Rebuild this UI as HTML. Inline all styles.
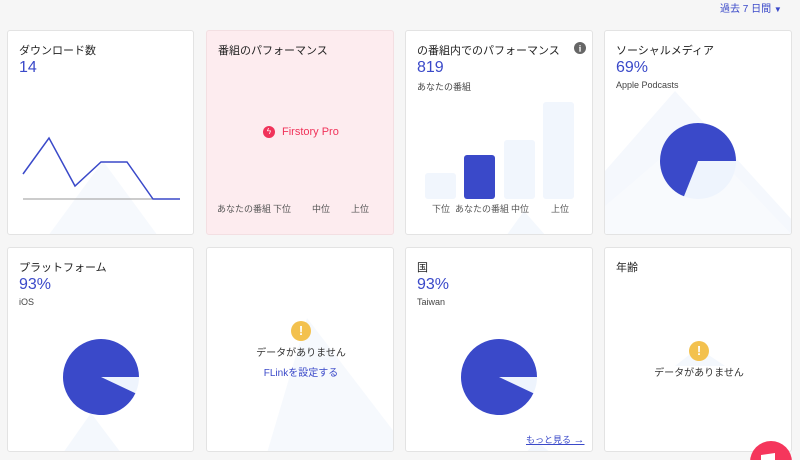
<!DOCTYPE html>
<html style="width:800px;height:460px;overflow:hidden"><head><meta charset="utf-8"><style>
*{margin:0;padding:0;box-sizing:border-box}
body{width:800px;height:460px;background:#f6f6f6;font-family:"Liberation Sans","Noto Sans CJK JP",sans-serif;position:relative;overflow:hidden;color:#333}
.card{position:absolute;background:#fff;border:1px solid #e3e3e3;border-radius:3px;overflow:hidden}
.t{position:absolute;left:11px;top:11px;font-size:11px;color:#222}
.n{position:absolute;left:11px;top:28px;font-size:16px;color:#3a49c9}
.s{position:absolute;left:11px;top:49px;font-size:9px;color:#444}
svg{position:absolute;left:0;top:0}
.lbl{position:absolute;font-size:9px;color:#555}
</style></head><body>
<div style="position:absolute;left:720px;top:0;font-size:10px;color:#3a49c9">過去 7 日間 <span style="font-size:8px">▼</span></div>

<div class="card" style="left:7px;top:30px;width:187px;height:205px">
<svg width="187" height="205"><polygon points="40,205 95,130 150,205" fill="#f6f9fd"/>
<line x1="15" y1="168" x2="145" y2="168" stroke="#999" stroke-width="1"/>
<polyline points="15,143 41,107 67,155 93,131 119,131 145,168 172,168" fill="none" stroke="#3a49c9" stroke-width="1.5"/></svg>
<div class="t">ダウンロード数</div><div class="n">14</div></div>

<div class="card" style="left:206px;top:30px;width:188px;height:205px;background:#fdecef;border-color:#f3dfe2">
<div class="t">番組のパフォーマンス</div>
<div style="position:absolute;left:56px;top:95px;font-size:11px;color:#f0335a;display:flex;align-items:center"><span style="display:inline-block;width:12px;height:12px;border-radius:50%;background:#f0335a;color:#fff;font-size:8px;text-align:center;line-height:12px;margin-right:7px">ϟ</span>Firstory Pro</div>
<div class="lbl" style="left:10px;top:171px">あなたの番組</div><div class="lbl" style="left:66px;top:171px">下位</div><div class="lbl" style="left:105px;top:171px">中位</div><div class="lbl" style="left:144px;top:171px">上位</div></div>

<div class="card" style="left:405px;top:30px;width:188px;height:205px">
<svg width="188" height="205"><polygon points="100,205 118,180 140,205" fill="#f4f8fd"/>
<rect x="19" y="142" width="31" height="26" rx="3" fill="#f1f6fd"/>
<rect x="58" y="124" width="31" height="44" rx="3" fill="#3a49c9"/>
<rect x="98" y="109" width="31" height="59" rx="3" fill="#f1f6fd"/>
<rect x="137" y="71" width="31" height="97" rx="3" fill="#f1f6fd"/>
<circle cx="174" cy="17" r="6" fill="#666"/><text x="174" y="20.5" font-size="9" fill="#fff" text-anchor="middle" font-family="Liberation Serif" font-weight="bold">i</text></svg>
<div class="t">の番組内でのパフォーマンス</div><div class="n">819</div><div class="s">あなたの番組</div>
<div class="lbl" style="left:26px;top:171px">下位</div><div class="lbl" style="left:49px;top:171px">あなたの番組</div><div class="lbl" style="left:105px;top:171px">中位</div><div class="lbl" style="left:145px;top:171px">上位</div></div>

<div class="card" style="left:604px;top:30px;width:188px;height:205px">
<svg width="188" height="205"><polygon points="0,140 70,60 188,190 188,205 0,205" fill="#f5f8fd"/>
<polygon points="0,175 88,100 188,205 0,205" fill="#f8fafd"/>
<circle cx="93" cy="130" r="38" fill="#eef4fd"/>
<path d="M93,130 L131,130 A38,38 0 1,0 79,165.3 Z" fill="#3a49c9"/></svg>
<div class="t">ソーシャルメディア</div><div class="n">69%</div><div class="s">Apple Podcasts</div></div>

<div class="card" style="left:7px;top:247px;width:187px;height:205px">
<svg width="187" height="205"><polygon points="55,205 83,165 113,205" fill="#f4f8fd"/>
<circle cx="93" cy="129" r="38" fill="#eef4fd"/>
<path d="M93,129 L131,129 A38,38 0 1,0 127.4,145.2 Z" fill="#3a49c9"/></svg>
<div class="t">プラットフォーム</div><div class="n">93%</div><div class="s">iOS</div></div>

<div class="card" style="left:206px;top:247px;width:188px;height:205px">
<svg width="188" height="205"><polygon points="60,205 100,70 188,185 188,205" fill="#f6f9fd"/></svg>
<div style="position:absolute;left:84px;top:73px;width:20px;height:20px;border-radius:50%;background:#f3c14e;color:#fff;font-size:13px;font-weight:bold;text-align:center;line-height:20px">!</div>
<div style="position:absolute;left:0;width:188px;top:96px;text-align:center;font-size:10px;color:#333">データがありません</div>
<div style="position:absolute;left:0;width:188px;top:116px;text-align:center;font-size:10px;color:#3a49c9">FLinkを設定する</div></div>

<div class="card" style="left:405px;top:247px;width:188px;height:205px">
<svg width="188" height="205"><polygon points="120,205 130,193 145,205" fill="#f4f8fd"/>
<circle cx="93" cy="129" r="38" fill="#eef4fd"/>
<path d="M93,129 L131,129 A38,38 0 1,0 127.4,145.2 Z" fill="#3a49c9"/></svg>
<div class="t">国</div><div class="n">93%</div><div class="s">Taiwan</div>
<div style="position:absolute;left:120px;top:185px;font-size:9px;color:#3a49c9;text-decoration:underline">もっと見る <span style="text-decoration:none;font-size:11px">→</span></div></div>

<div class="card" style="left:604px;top:247px;width:188px;height:205px">
<svg width="188" height="205"><polygon points="70,118 93,100 120,118" fill="#f4f8fd"/></svg>
<div class="t">年齢</div>
<div style="position:absolute;left:84px;top:93px;width:20px;height:20px;border-radius:50%;background:#f3c14e;color:#fff;font-size:13px;font-weight:bold;text-align:center;line-height:20px">!</div>
<div style="position:absolute;left:0;width:188px;top:116px;text-align:center;font-size:10px;color:#333">データがありません</div></div>

<div style="position:absolute;left:750px;top:441px;width:42px;height:42px;border-radius:50%;background:#f5365c"></div>
<div style="position:absolute;left:761px;top:454px;width:14px;height:8px;background:#fff;transform:skewY(-8deg)"></div>
</body></html>
